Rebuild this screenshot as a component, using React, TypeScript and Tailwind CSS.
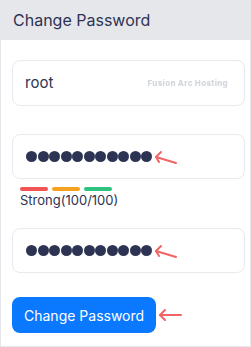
const LeftArrow = ({ className }: { className?: string }) => (
	<svg className={className} width="24" height="18" viewBox="0 0 24 18" fill="none">
		<path d="M2 7 L22 13" stroke="#f26464" strokeWidth="2" strokeLinecap="round" />
		<path d="M7 2 L2 7 L5 12" stroke="#f26464" strokeWidth="2" strokeLinecap="round" strokeLinejoin="round" />
	</svg>
);

const StraightArrow = ({ className }: { className?: string }) => (
	<svg className={className} width="24" height="14" viewBox="0 0 24 14" fill="none">
		<path d="M2 7 L23 7" stroke="#f26464" strokeWidth="2" strokeLinecap="round" />
		<path d="M7 2 L2 7 L7 12" stroke="#f26464" strokeWidth="2" strokeLinecap="round" strokeLinejoin="round" />
	</svg>
);

const Dots = () => (
	<div className="flex gap-[0.5px]">
		{Array.from({ length: 11 }).map((_, i) => (
			<div key={i} className="h-[11px] w-[11px] rounded-full bg-[#2d3352]" />
		))}
	</div>
);

const PasswordField = () => (
	<div className="flex h-[45px] items-center rounded-lg border border-[#e8eaef] pl-[13px]">
		<Dots />
		<LeftArrow className="ml-[2px] mt-[4px]" />
	</div>
);

export default function App() {
	return (
		<div
			className="flex h-[347px] w-[251px] flex-col border-x border-b border-[#e5e7eb] bg-white text-[#2d3352]"
			style={{ fontFamily: 'Inter, "Noto Sans", sans-serif' }}
		>
			<div className="flex h-10 items-center bg-[#e6e7eb] px-3 text-[16px]">Change Password</div>

			<div className="flex flex-col pl-[11px] pr-[5px] pt-5">
				<div className="flex h-[46px] items-center justify-between rounded-lg border border-[#e8eaef] pl-3 pr-4">
					<span className="text-[15px]">root</span>
					<span className="text-[8px] font-extrabold tracking-[0.3px] text-[#d3d6db] blur-[0.4px]">
						Fusion Arc Hosting
					</span>
				</div>

				<div className="mt-7">
					<PasswordField />
				</div>

				<div className="mt-2 flex gap-1 pl-2">
					<div className="h-1 w-7 rounded-full bg-[#f25454]" />
					<div className="h-1 w-7 rounded-full bg-[#f7a120]" />
					<div className="h-1 w-7 rounded-full bg-[#2ec37f]" />
				</div>
				<div className="mt-[1px] pl-2 text-[13px] leading-4">Strong(100/100)</div>

				<div className="mt-[20px]">
					<PasswordField />
				</div>

				<div className="mt-6 flex items-center">
					<button className="h-9 rounded-lg bg-[#0a79ff] px-3 text-[14px] text-white">Change Password</button>
					<StraightArrow className="ml-[2px]" />
				</div>
			</div>
		</div>
	);
}
